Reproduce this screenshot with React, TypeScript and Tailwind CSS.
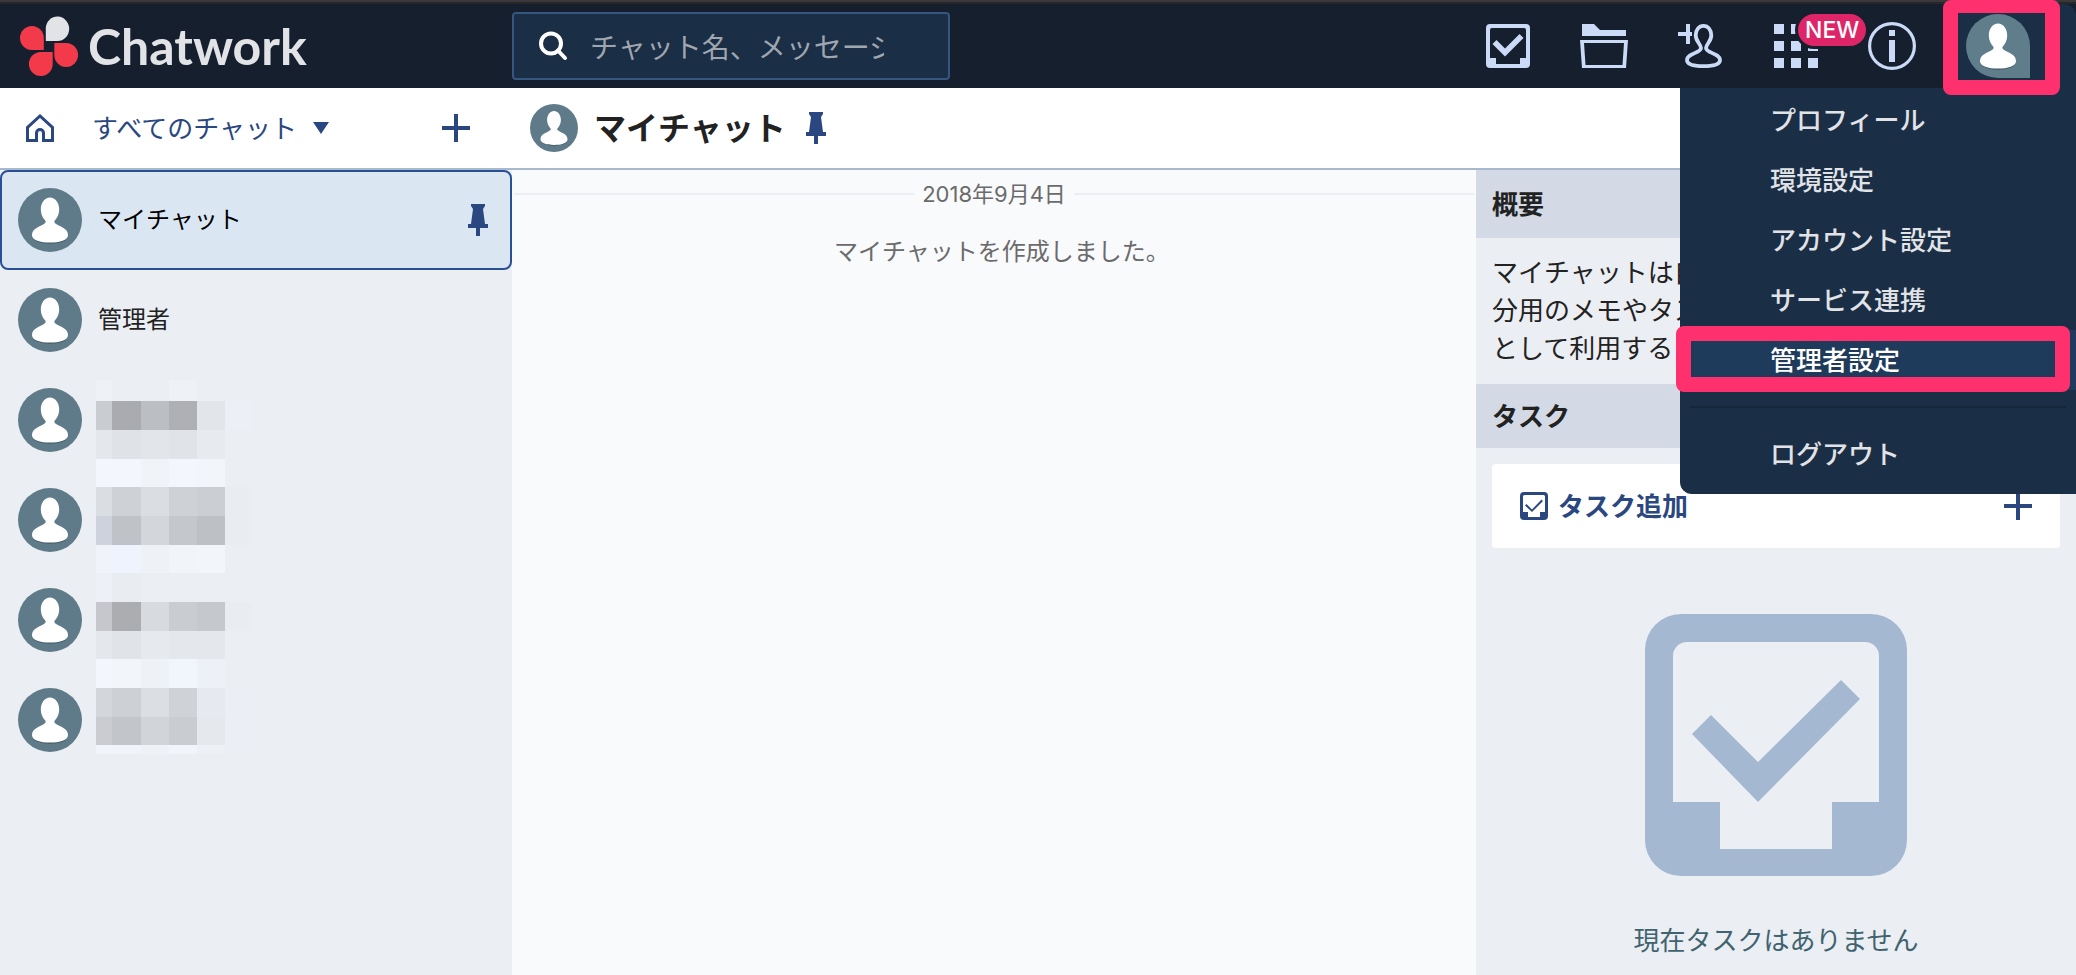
import { ReactNode } from 'react';

interface IconProps {
  className?: string;
}

interface ChatRoom {
  id: number;
  name: string;
  pinned?: boolean;
}

const rooms: ChatRoom[] = [
  { id: 1, name: 'マイチャット', pinned: true },
  { id: 2, name: '管理者' },
  { id: 3, name: '' },
  { id: 4, name: '' },
  { id: 5, name: '' },
  { id: 6, name: '' },
];

const menuItems = ['プロフィール', '環境設定', 'アカウント設定', 'サービス連携', '管理者設定'];

// masked room names: column edges, row edges and the fill of every cell
const maskX = [0, 16, 45, 73, 101, 129, 156];
const maskY = [0, 21, 50, 79, 107, 136, 165, 193, 222, 251, 279, 308, 337, 365, 374];
const maskFill = [
  ['#eef1f6', '#ebeef3', '#ebeef3', '#eef1f6', '#ebeef3', '#ebeef3'],
  ['#c9ccd1', '#a9abb0', '#bbbfc4', '#aeb0b5', '#e2e5ea', '#eceff5'],
  ['#e4e7eb', '#dfe2e6', '#e2e5e9', '#e0e3e8', '#e7eaee', '#ebeef3'],
  ['#f3f7fd', '#f3f7fd', '#f0f4f9', '#f3f7fd', '#f2f6fb', '#ebeef3'],
  ['#dadde2', '#ced1d6', '#dadde2', '#ced1d6', '#cbced3', '#e9ecf1'],
  ['#ced2dc', '#bfc2c7', '#d3d6db', '#c4c7cc', '#bdc0c5', '#e9ecf1'],
  ['#f0f4fa', '#eef3fd', '#eef2f7', '#f1f5fa', '#f2f6fb', '#ebeef3'],
  ['#edf0f6', '#e9ecf1', '#ebeef3', '#ebeef3', '#ebeef3', '#ebeef3'],
  ['#c5c7cc', '#acadb1', '#d7dadf', '#c9ccd1', '#c5c8cd', '#e9ecf1'],
  ['#e4e7ec', '#e0e3e7', '#e6e9ee', '#e4e7eb', '#e4e7eb', '#ebeef3'],
  ['#f3f7fd', '#f2f6fb', '#eef2f7', '#f0f6fb', '#edf0f6', '#ebeef3'],
  ['#d3d6db', '#cdd0d5', '#dbdee3', '#cfd2d7', '#e6e9ef', '#ebeef4'],
  ['#caccd1', '#c2c5ca', '#d1d4d9', '#c9ccd1', '#e5e8ed', '#ebeef4'],
  ['#f1f5fb', '#f0f4fa', '#eef2f7', '#f1f5fb', '#edf0f5', '#ebeef3'],
];

function NameMask({ className }: IconProps) {
  return (
    <svg className={className} viewBox="0 0 156 374" shapeRendering="crispEdges" aria-hidden="true">
      {maskFill.map((row, r) =>
        row.map((fill, c) => (
          <rect
            key={`${r}-${c}`}
            x={maskX[c]}
            y={maskY[r]}
            width={maskX[c + 1] - maskX[c]}
            height={maskY[r + 1] - maskY[r]}
            fill={fill}
          />
        ))
      )}
    </svg>
  );
}

function LogoMark({ className }: IconProps) {
  return (
    <svg className={className} viewBox="0 0 58 60" aria-hidden="true">
      <path fill="#e1e3e7" d="M25.800 25V12.200a11.700 12.200 0 1 1 11.700 12.800z" />
      <path fill="#f33a4a" d="M23.800 34V22a11.900 12 0 1 0-11.900 12z" />
      <path fill="#f33a4a" d="M34.300 27v12a11.900 12 0 1 0 11.900-12z" />
      <path fill="#f33a4a" d="M32.700 36v12a11.900 12 0 1 1-11.900-12z" />
    </svg>
  );
}

function Person() {
  return (
    <path
      fill="#fff"
      d="M32 9.400c5.200 0 9.200 5.200 9.200 12 0 5-2.200 8.600-4.400 11-.8 1-.6 2.200.6 3C42 38.600 50 40 50 47c0 5.400-8 7.600-18 7.600S14 52.400 14 47c0-7 8-8.400 12.600-11.600 1.200-.8 1.400-2 .6-3-2.200-2.400-4.400-6-4.400-11 0-6.800 4-12 9.200-12z"
    />
  );
}

function Avatar({ className, drop }: IconProps & { drop?: boolean }) {
  return (
    <svg className={className} viewBox="0 0 64 64" aria-hidden="true">
      {drop ? (
        <path fill="#607d8b" d="M64 64V32A32 32 0 1 0 32 64z" />
      ) : (
        <circle cx="32" cy="32" r="32" fill="#5f7b89" />
      )}
      <ellipse cx="32" cy="49" rx="17.500" ry="6.800" fill="#3f5966" />
      <Person />
    </svg>
  );
}

function PinIcon({ className }: IconProps) {
  return (
    <svg className={className} viewBox="0 0 20 32" fill="#2a4780" aria-hidden="true">
      <path d="M3 0h14v2l-2 3 2 15h3v4h-8v8H8v-8H0v-4h3L5 5 3 2z" />
    </svg>
  );
}

function PlusIcon({ className }: IconProps) {
  return (
    <svg className={className} viewBox="0 0 28 28" fill="#2a4780" aria-hidden="true">
      <path d="M12 0h4v12h12v4H16v12h-4V16H0v-4h12z" />
    </svg>
  );
}

function HomeIcon({ className }: IconProps) {
  return (
    <svg className={className} viewBox="0 0 28 28" fill="none" stroke="#2a4780" strokeWidth="3" aria-hidden="true">
      <path d="M1.500 26.500V13.500L14 2l12.500 11.500v13h-9V19a3.500 3.500 0 0 0-7 0v7.500z" />
    </svg>
  );
}

function TaskIcon({ className }: IconProps) {
  return (
    <svg className={className} viewBox="0 0 44 44" fill="currentColor" aria-hidden="true">
      <path
        fillRule="evenodd"
        d="M4 0h36a4 4 0 0 1 4 4v36a4 4 0 0 1-4 4H4a4 4 0 0 1-4-4V4a4 4 0 0 1 4-4zM6 4a2 2 0 0 0-2 2v28h6v6h24v-6h6V6a2 2 0 0 0-2-2z"
      />
      <path d="M6.500 20l4-4 8.500 8.500L33.500 10l4 4L19 32.500z" />
    </svg>
  );
}

function TaskSmallIcon({ className }: IconProps) {
  return (
    <svg className={className} viewBox="0 0 28 28" fill="#2a4780" aria-hidden="true">
      <path
        fillRule="evenodd"
        d="M4 0h20a4 4 0 0 1 4 4v20a4 4 0 0 1-4 4H4a4 4 0 0 1-4-4V4a4 4 0 0 1 4-4zM4.500 3A1.500 1.500 0 0 0 3 4.500V20h5v5h12v-5h5V4.500A1.500 1.500 0 0 0 23.500 3z"
      />
      <path d="M5 13.500l1.500-1.500 5.500 5.500L21.500 7.500 23 9 12 20z" />
    </svg>
  );
}

function TaskLargeIcon({ className }: IconProps) {
  return (
    <svg className={className} viewBox="0 0 262 262" fill="#a5b8d2" aria-hidden="true">
      <path
        fillRule="evenodd"
        d="M36 0h190a36 36 0 0 1 36 36v190a36 36 0 0 1-36 36H36a36 36 0 0 1-36-36V36A36 36 0 0 1 36 0zM42 28a14 14 0 0 0-14 14v146h47v47h112v-47h47V42a14 14 0 0 0-14-14z"
      />
      <path d="M47 120l19-19 47 47 83-82 19 19-102 103z" />
    </svg>
  );
}

function FolderIcon({ className }: IconProps) {
  return (
    <svg className={className} viewBox="0 0 48 44" fill="#cbdaf7" aria-hidden="true">
      <path d="M2 0h12l6 6h26v6H2z" />
      <path fillRule="evenodd" d="M0 16h48l-2 28H2zM4 19l1.500 22h37L44 19z" />
    </svg>
  );
}

function AddPersonIcon({ className }: IconProps) {
  return (
    <svg className={className} viewBox="0 0 44 44" aria-hidden="true">
      <path fill="#cbdaf7" d="M8 0h4v8h2v4h-2v8H8v-8H0V8h8z" />
      <path
        fill="none"
        stroke="#cbdaf7"
        strokeWidth="3.800"
        d="M25.500 1.900c4.700 0 7.800 4 7.800 9.400 0 6.500-5.300 8.700-5.300 12.700 0 5 14 5.500 14 12 0 4.200-7 6.100-16.500 6.100S9 40.200 9 36c0-6.500 14-7 14-12 0-4-5.300-6.200-5.300-12.700 0-5.400 3.100-9.400 7.800-9.400z"
      />
    </svg>
  );
}

function AppsIcon({ className }: IconProps) {
  return (
    <svg className={className} viewBox="0 0 44 44" fill="#cbdaf7" aria-hidden="true">
      {[0, 17, 34].map((y) => [0, 17, 34].map((x) => <rect key={`${x}-${y}`} x={x} y={y} width="10" height="10" />))}
    </svg>
  );
}

function InfoIcon({ className }: IconProps) {
  return (
    <svg className={className} viewBox="0 0 48 48" aria-hidden="true">
      <circle cx="24" cy="24" r="22.400" fill="none" stroke="#cbdaf7" strokeWidth="3.200" />
      <path fill="#cbdaf7" d="M21 8h6v6h-6zM21 18h6v22h-6z" />
    </svg>
  );
}

function SearchIcon({ className }: IconProps) {
  return (
    <svg className={className} viewBox="0 0 30 30" fill="none" stroke="#fff" strokeWidth="4" aria-hidden="true">
      <circle cx="13" cy="12.500" r="10" />
      <path d="M20 19.500l7 7.500" strokeWidth="4" strokeLinecap="round" />
    </svg>
  );
}

function HeaderButton({ label, children }: { label: string; children: ReactNode }) {
  return (
    <button type="button" aria-label={label} className="relative flex h-full w-24 items-center justify-center">
      {children}
    </button>
  );
}

function GlobalHeader() {
  return (
    <header className="flex h-[86px] border-t-2 border-[#272728] bg-[#151f2d]">
      <a href="#" className="flex w-[512px] shrink-0 items-center pl-5">
        <LogoMark className="h-[60px] w-[58px]" />
        <span className="ml-2.5 font-[Lato] text-[50px] leading-[60px] font-bold text-[#e1e3e7]">Chatwork</span>
      </a>
      <label className="my-2 flex w-[438px] items-center rounded border-2 border-[#34567f] bg-[#1a2e46] pr-16 pl-6">
        <SearchIcon className="h-[30px] w-[30px] shrink-0" />
        <input
          type="text"
          aria-label="検索"
          placeholder="チャット名、メッセージ"
          className="ml-[22px] w-full min-w-0 bg-transparent text-[28px] text-[#e1e3e7] outline-none placeholder:text-[#a0a6b0]"
        />
      </label>
      <nav className="ml-auto flex items-center">
        <HeaderButton label="タスク">
          <TaskIcon className="size-11 text-[#cbdaf7]" />
        </HeaderButton>
        <HeaderButton label="ファイル">
          <FolderIcon className="h-11 w-12" />
        </HeaderButton>
        <HeaderButton label="コンタクト">
          <AddPersonIcon className="size-11" />
        </HeaderButton>
        <HeaderButton label="アプリ">
          <AppsIcon className="size-11" />
          <span className="absolute top-[7px] left-[47px] z-10 rounded-full border-[3px] border-[#151f2d] bg-[#de2568] px-[7px] font-[Inter] text-[23px] leading-8 font-medium text-white">
            NEW
          </span>
        </HeaderButton>
        <HeaderButton label="ヘルプ">
          <InfoIcon className="size-12" />
        </HeaderButton>
        <UserMenu />
      </nav>
    </header>
  );
}

function UserMenu() {
  return (
    <div className="relative ml-4 h-full w-30 rounded-t-xl bg-[#1a2e46]">
      <button type="button" aria-label="アカウント" className="flex h-full w-full items-center pl-2.5">
        <Avatar drop className="size-16" />
      </button>
      <div className="absolute -top-1 -left-[13px] z-30 h-[95px] w-[117px] rounded-lg border-[15px] border-t-[13px] border-[#ff306e]" />
      <ul className="absolute top-full right-0 z-20 w-[396px] rounded-bl-xl bg-[#1a2e46] pt-0.5 pb-2.5 text-[26px] font-medium text-[#e1e3e7]">
        {menuItems.map((item) => (
          <li key={item} className="relative">
            <a
              href="#"
              className={`flex h-15 items-center pb-1 pl-[90px] ${item === '管理者設定' ? 'bg-[#1f3b5b] text-white' : ''}`}
            >
              {item}
            </a>
            {item === '管理者設定' && (
              <div className="absolute -top-1 right-1.5 -bottom-0.5 -left-1 rounded-lg border-[15px] border-[#ff306e]" />
            )}
          </li>
        ))}
        <li className="mx-2.5 my-4 h-0.5 bg-[#16263a]" />
        <li>
          <a href="#" className="flex h-15 items-center pb-1 pl-[90px]">
            ログアウト
          </a>
        </li>
      </ul>
    </div>
  );
}

function Sidebar() {
  return (
    <aside className="flex w-[512px] shrink-0 flex-col bg-[#ebeef3]">
      <div className="flex h-[82px] items-center border-b-2 border-[#a8b9cd] bg-white pr-[42px] pl-[26px]">
        <button type="button" aria-label="ホーム">
          <HomeIcon className="size-7" />
        </button>
        <button type="button" className="ml-[38px] flex items-center gap-4 text-[26px] text-[#2a4780]">
          <span className="pb-1">すべてのチャット</span>
          <svg className="h-3 w-4" viewBox="0 0 16 12" fill="#2a4780" aria-hidden="true">
            <path d="M0 0h16L8 12z" />
          </svg>
        </button>
        <button type="button" aria-label="追加" className="ml-auto">
          <PlusIcon className="size-7" />
        </button>
      </div>
      <ul className="relative">
        {rooms.map((room) => (
          <li key={room.id}>
            <a
              href="#"
              className={`flex h-25 items-center rounded-lg border-2 px-4 pr-[22px] text-2xl ${
                room.pinned ? 'border-[#2a4f96] bg-[#dbe6f3] text-black' : 'border-transparent text-[#222]'
              }`}
            >
              <Avatar className="size-16" />
              <span className="ml-4 pb-1">{room.name}</span>
              {room.pinned && <PinIcon className="ml-auto h-8 w-5" />}
            </a>
          </li>
        ))}
        <NameMask className="absolute top-[210px] left-24 h-[374px] w-[156px]" />
      </ul>
    </aside>
  );
}

function Timeline() {
  return (
    <section className="flex-1 bg-[#f9fafc] px-0.5 text-[#6b6b6b]">
      <div className="flex h-12 items-center gap-2 text-[22px]">
        <div className="h-0.5 flex-1 bg-[#ebeef3]" />
        <span className="font-[Inter,'Noto_Sans_CJK_JP',sans-serif]">2018年9月4日</span>
        <div className="h-0.5 flex-1 bg-[#ebeef3]" />
      </div>
      <p className="mt-3 pl-4 text-center text-2xl leading-10">マイチャットを作成しました。</p>
    </section>
  );
}

function RightPanel() {
  return (
    <section className="flex w-[600px] shrink-0 flex-col bg-[#ebeef3] text-[26px] text-[#222]">
      <h2 className="flex h-[68px] items-center bg-[#d3dae6] px-4 pb-1 font-bold">概要</h2>
      <p className="h-[146px] px-4 pt-3.5 leading-[38px]">
        マイチャットは自
        <br />
        分用のメモやタス
        <br />
        として利用する
      </p>
      <h2 className="flex h-16 items-center bg-[#d3dae6] px-4 pb-1 font-bold">タスク</h2>
      <button
        type="button"
        className="m-4 flex h-21 items-center rounded bg-white px-7 font-bold text-[#2a4780]"
      >
        <TaskSmallIcon className="size-7" />
        <span className="ml-2.5 pb-1">タスク追加</span>
        <PlusIcon className="ml-auto size-7" />
      </button>
      <TaskLargeIcon className="mt-[50px] size-[262px] self-center" />
      <p className="mt-11 text-center leading-[38px] text-[#41636f]">現在タスクはありません</p>
    </section>
  );
}

export default function App() {
  return (
    <div className="flex h-screen flex-col overflow-hidden bg-white font-['Noto_Sans_CJK_JP',sans-serif]">
      <div className="h-0.5 shrink-0 bg-[#39393d]" />
      <GlobalHeader />
      <div className="flex flex-1">
        <Sidebar />
        <main className="flex min-w-0 flex-1 flex-col">
          <div className="flex h-[82px] items-center border-b-2 border-[#a8b9cd] bg-white pl-[18px]">
            <Avatar className="size-12" />
            <h1 className="ml-4 pb-1 text-[32px] font-bold text-[#222]">マイチャット</h1>
            <PinIcon className="ml-5 h-8 w-5" />
          </div>
          <div className="flex flex-1">
            <Timeline />
            <RightPanel />
          </div>
        </main>
      </div>
    </div>
  );
}
